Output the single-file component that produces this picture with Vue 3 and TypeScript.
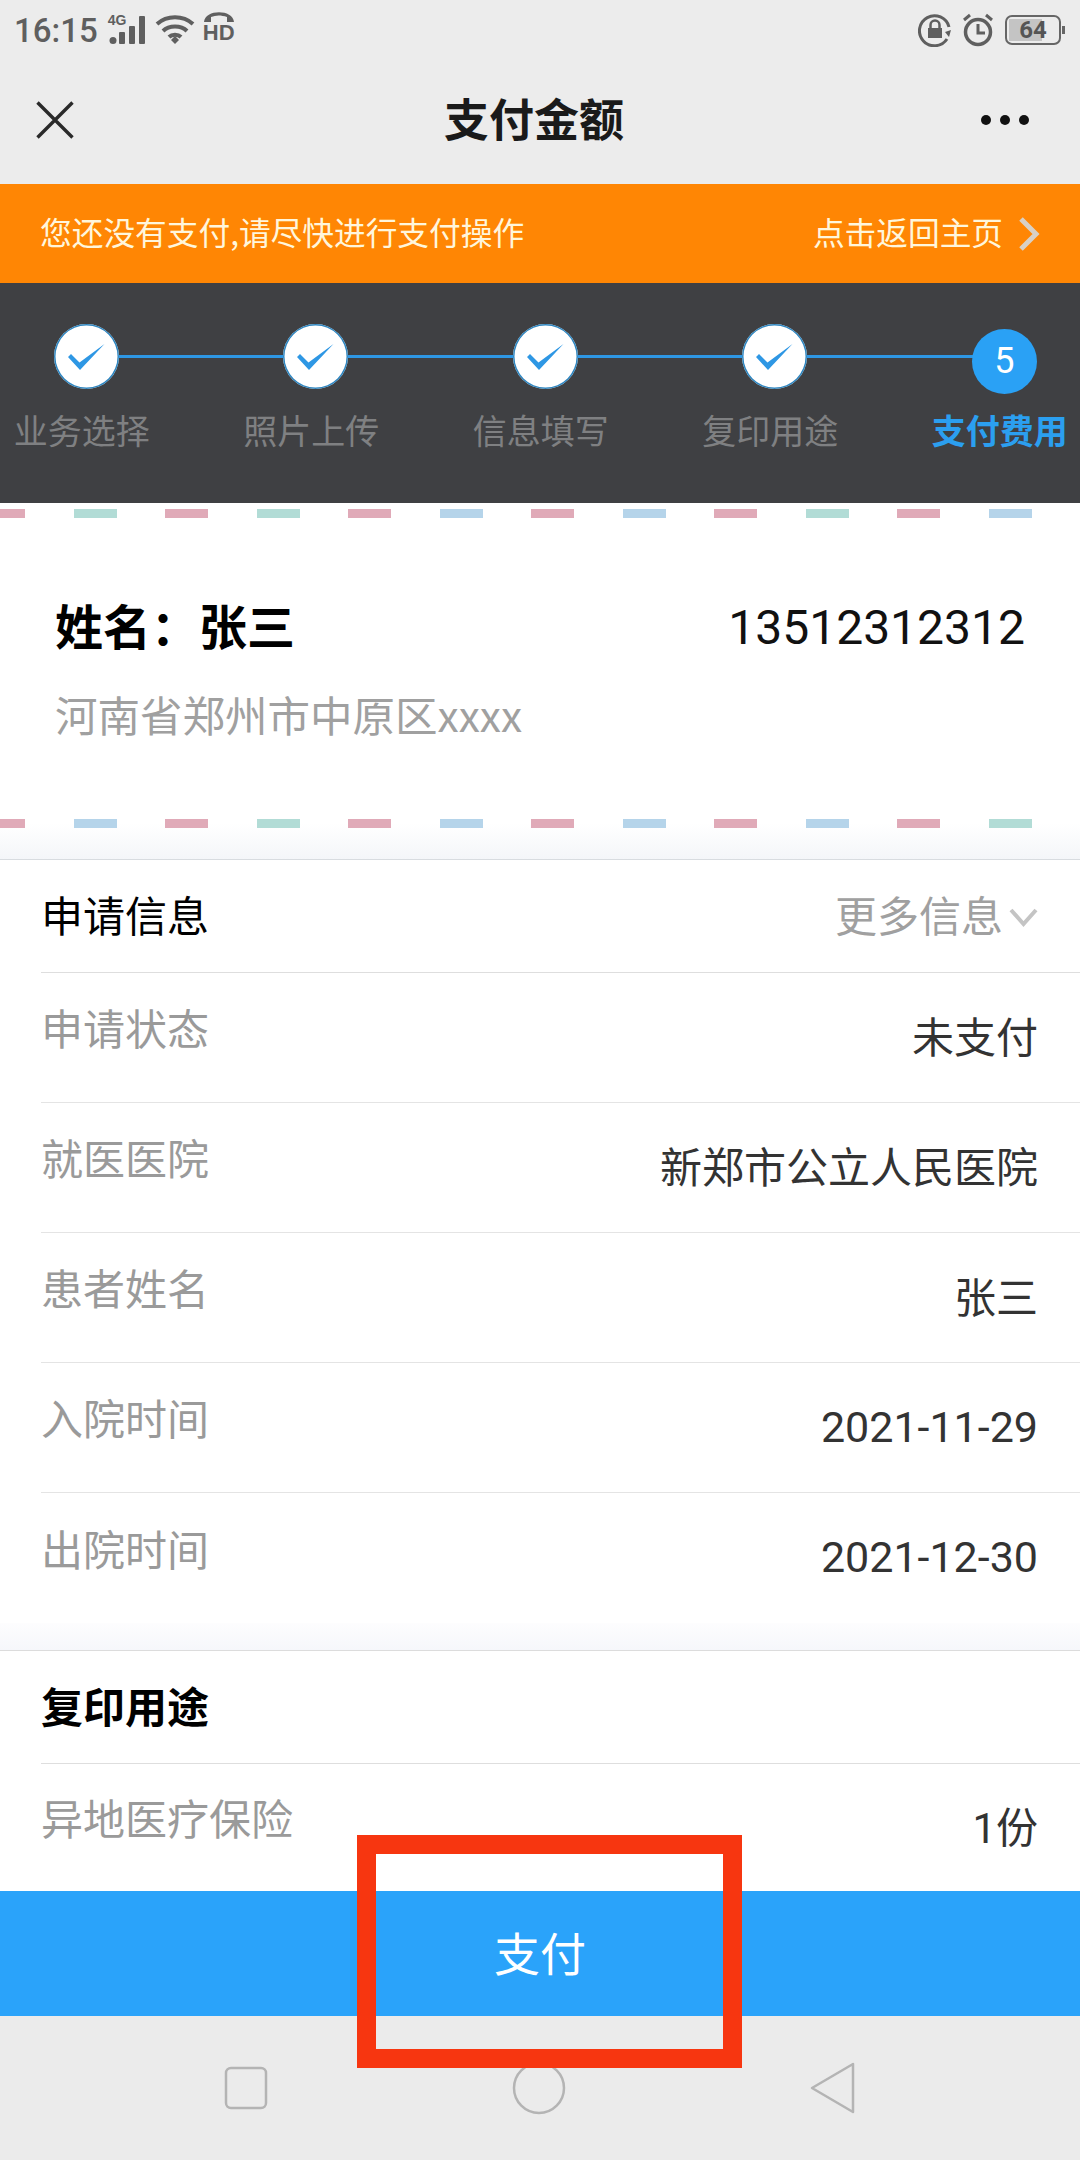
<template>
  <div class="phone">
    <header class="top">
      <div class="status">
        <div class="status-left">
          <span class="clock">16:15</span>
          <div class="sb-signal">
            <span class="sb-4g">4G</span>
            <svg width="40" height="30" viewBox="0 0 40 30">
              <circle cx="5" cy="25.5" r="3.5" fill="#5f5f5f" />
              <rect x="11" y="17" width="6" height="12" rx="1" fill="#5f5f5f" />
              <rect x="21" y="11" width="6" height="18" rx="1" fill="#5f5f5f" />
              <rect x="31" y="1" width="6" height="28" rx="1" fill="#5f5f5f" />
            </svg>
          </div>
          <svg class="sb-wifi" width="40" height="30" viewBox="0 0 40 30" fill="none" stroke="#5f5f5f" stroke-width="4">
            <path d="M2 9 C12 0 28 0 38 9" />
            <path d="M8 16 C14 10 26 10 32 16" />
            <path d="M14 22 C17 19 23 19 26 22" />
            <path d="M16 25 L20 21 L24 25 L20 29 Z" fill="#5f5f5f" stroke="none" />
          </svg>
          <div class="sb-hd">
            <svg width="32" height="14" viewBox="0 0 32 14">
              <path d="M1 12 C2 -1 30 -1 31 12 L24 12 L24 7 C18 5 13 5 8 7 L8 12 Z" fill="#5f5f5f" />
            </svg>
            <span class="sb-hd-text">HD</span>
          </div>
        </div>
        <div class="status-right">
          <svg width="34" height="34" viewBox="0 0 34 34" fill="none" stroke="#5f5f5f" stroke-width="3">
            <path d="M29 26 A15 15 0 1 1 31 14" />
            <path d="M27 19 L33 17 L31 24 Z" fill="#5f5f5f" stroke="none" />
            <rect x="10" y="15" width="14" height="10" fill="#5f5f5f" stroke="none" />
            <path d="M12.5 15 V12 A4.5 4.5 0 0 1 21.5 12 V15" stroke-width="2.5" />
          </svg>
          <svg width="32" height="34" viewBox="0 0 32 34" fill="none" stroke="#5f5f5f" stroke-width="3.5">
            <circle cx="16" cy="19" r="12.5" />
            <path d="M16 11 V20 H23" stroke-width="3" />
            <path d="M2 7 L8 2 M30 7 L24 2" stroke-width="3" />
          </svg>
          <div class="battery">
            <div class="battery-body">
              <span class="battery-fill" :style="{ width: batteryLevel + '%' }"></span>
              <span class="battery-num">{{ batteryLevel }}</span>
            </div>
            <span class="battery-cap"></span>
          </div>
        </div>
      </div>
      <div class="nav">
        <svg width="38" height="38" viewBox="0 0 38 38" stroke="#2a2a2a" stroke-width="3.4">
          <path d="M1.5 1.5 L36.5 36.5 M36.5 1.5 L1.5 36.5" />
        </svg>
        <h1 class="title">支付金额</h1>
        <div class="dots"><i></i><i></i><i></i></div>
      </div>
    </header>

    <div class="notice">
      <span>您还没有支付,请尽快进行支付操作</span>
      <span class="notice-link">
        点击返回主页
        <svg width="22" height="34" viewBox="0 0 22 34" fill="none" stroke="#d8d0c6" stroke-width="5">
          <path d="M3 2 L18 17 L3 32" />
        </svg>
      </span>
    </div>

    <div class="steps">
      <div class="steps-track">
        <div v-for="(step, i) in steps" :key="step" class="step" :class="{ current: i === steps.length - 1 }">
          <div class="step-dot">
            <svg v-if="i < steps.length - 1" width="65" height="65" viewBox="0 0 65 65">
              <path d="M14 33 L17 30 L25.5 38.5 L50.5 20 L26 46 Z" fill="#2e97e4" />
            </svg>
            <span v-else>{{ i + 1 }}</span>
          </div>
          <div class="step-label">{{ step }}</div>
        </div>
      </div>
    </div>

    <section class="envelope">
      <div class="airmail top-edge">
        <i v-for="(c, i) in topDashes" :key="i" :style="{ background: c }"></i>
      </div>
      <div class="person">
        <div class="person-line">
          <span class="person-name">{{ personName }}</span>
          <span class="person-phone">13512312312</span>
        </div>
        <div class="person-addr">河南省郑州市中原区xxxx</div>
      </div>
      <div class="airmail bottom-edge">
        <i v-for="(c, i) in bottomDashes" :key="i" :style="{ background: c }"></i>
      </div>
    </section>

    <section class="panel">
      <div class="panel-head">
        <span class="head-text">申请信息</span>
        <span class="more">
          更多信息
          <svg width="29" height="20" viewBox="0 0 29 20" fill="none" stroke="#c4c4c4" stroke-width="4">
            <path d="M2 3 L14.5 17 L27 3" />
          </svg>
        </span>
      </div>
      <div v-for="row in infoRows" :key="row.label" class="row">
        <span class="row-label">{{ row.label }}</span>
        <span class="row-value" :class="{ date: isDate(row.value) }">{{ row.value }}</span>
      </div>
    </section>

    <div class="gap"></div>

    <section class="panel usage">
      <div class="panel-head">
        <span class="head-text bold">复印用途</span>
      </div>
      <div class="row short">
        <span class="row-label">异地医疗保险</span>
        <span class="row-value">1份</span>
      </div>
    </section>

    <button class="pay">支付</button>

    <footer class="softkeys">
      <svg width="44" height="44" viewBox="0 0 44 44" fill="none" stroke="#b4b4b4" stroke-width="2.5">
        <rect x="2" y="2" width="40" height="40" rx="5" />
      </svg>
      <svg width="54" height="54" viewBox="0 0 54 54" fill="none" stroke="#b4b4b4" stroke-width="2.5">
        <circle cx="27" cy="27" r="25" />
      </svg>
      <svg width="46" height="52" viewBox="0 0 46 52" fill="none" stroke="#b4b4b4" stroke-width="2.5" stroke-linejoin="round">
        <path d="M43 2 V50 L2 26 Z" />
      </svg>
    </footer>

    <div class="callout"></div>
  </div>
</template>

<script setup lang="ts">
const batteryLevel = 64

// full-width colon between label and name
const personName = '姓名\uFF1A张三'

const steps = ['业务选择', '照片上传', '信息填写', '复印用途', '支付费用']

const infoRows = [
  { label: '申请状态', value: '未支付' },
  { label: '就医医院', value: '新郑市公立人民医院' },
  { label: '患者姓名', value: '张三' },
  { label: '入院时间', value: '2021-11-29' },
  { label: '出院时间', value: '2021-12-30' },
]

function isDate(value: string) {
  return /^\d{4}-\d{2}-\d{2}$/.test(value)
}

const RED = '#e0aab8'
const TEAL = '#b2dcd6'
const BLUE = '#b5d4ea'

// airmail stripe: red every other dash, the cool colour varies along the edge
const topCool = [TEAL, TEAL, BLUE, BLUE, TEAL, BLUE]
const bottomCool = [BLUE, TEAL, BLUE, BLUE, BLUE, TEAL]
const topDashes = Array.from({ length: 13 }, (_, i) => (i % 2 ? topCool[(i - 1) / 2] : RED))
const bottomDashes = Array.from({ length: 13 }, (_, i) => (i % 2 ? bottomCool[(i - 1) / 2] : RED))
</script>

<style>
html,
body {
  margin: 0;
  background: #ebebeb;
}
</style>

<style scoped>
.phone {
  position: relative;
  width: 1080px;
  height: 2160px;
  overflow: hidden;
  background: #fff;
  font-family: "Noto Sans CJK SC", Roboto, sans-serif;
  display: flex;
  flex-direction: column;
}

.top {
  height: 184px;
  background: #ececec;
}
.status {
  height: 56px;
  padding: 4px 15px 0 14px;
  display: flex;
  justify-content: space-between;
  align-items: center;
  box-sizing: border-box;
}
.status-left,
.status-right {
  display: flex;
  align-items: center;
}
.clock {
  font-family: Roboto, sans-serif;
  font-weight: 500;
  font-size: 33px;
  color: #5f5f5f;
}
.sb-signal {
  position: relative;
  margin-left: 10px;
  height: 30px;
}
.sb-signal svg {
  display: block;
}
.sb-4g {
  position: absolute;
  left: 0;
  top: -3px;
  font: 700 14px/16px "Liberation Sans", sans-serif;
  color: #5f5f5f;
}
.sb-wifi {
  margin-left: 7px;
}
.sb-hd {
  margin-left: 8px;
  margin-top: -9px;
  display: flex;
  flex-direction: column;
  align-items: center;
  width: 32px;
}
.sb-hd svg {
  display: block;
}
.sb-hd-text {
  font: 700 22px/17px "Liberation Sans", sans-serif;
  color: #5f5f5f;
}
.status-right {
  gap: 10px;
}
.battery {
  display: flex;
  align-items: center;
  margin-left: 1px;
}
.battery-body {
  position: relative;
  width: 56px;
  height: 30px;
  border: 2px solid #666;
  border-radius: 7px;
  box-sizing: border-box;
  display: flex;
  align-items: center;
  justify-content: center;
}
.battery-fill {
  position: absolute;
  left: 2px;
  top: 2px;
  bottom: 2px;
  background: #c4c4c4;
}
.battery-num {
  position: relative;
  font: 700 24px Roboto, sans-serif;
  color: #555;
}
.battery-cap {
  width: 3px;
  height: 8px;
  background: #666;
  margin-left: 1px;
}

.nav {
  height: 128px;
  padding: 0 51px 0 36px;
  display: flex;
  align-items: center;
  justify-content: space-between;
  position: relative;
}
.title {
  position: absolute;
  left: 0;
  right: 12px;
  margin: 0;
  padding-bottom: 6px;
  text-align: center;
  font-size: 45px;
  font-weight: 700;
  color: #1a1a1a;
}
.dots {
  display: flex;
  gap: 9px;
}
.dots i {
  width: 10px;
  height: 10px;
  border-radius: 50%;
  background: #111;
}

.notice {
  height: 99px;
  background: #ff8604;
  padding: 0 40px 5px;
  box-sizing: border-box;
  display: flex;
  align-items: center;
  justify-content: space-between;
  color: #fff6dc;
  font-size: 31.7px;
}
.notice-link {
  display: flex;
  align-items: center;
  gap: 15px;
}
.notice-link svg {
  margin-top: 5px;
}

.steps {
  height: 220px;
  background: #3f4043;
}
.steps-track {
  display: grid;
  grid-template-columns: repeat(5, 229.5px);
  margin-left: -33px;
  height: 100%;
}
.step {
  position: relative;
  display: flex;
  flex-direction: column;
  align-items: center;
  padding-top: 41px;
}
.step-dot {
  position: relative;
  z-index: 1;
  width: 65px;
  height: 65px;
  margin-left: 9px;
  border-radius: 50%;
  background: #fff;
  box-shadow: inset 0 0 0 1.5px #2f86c0;
}
.step-dot svg {
  display: block;
}
/* connector from this dot to the next one */
.step::after {
  content: "";
  position: absolute;
  top: 72px;
  left: 50%;
  width: 229.5px;
  height: 3px;
  background: #2e97e4;
}
.step.current::after {
  display: none;
}
.step.current .step-dot {
  margin-top: 5px;
  background: #2aa1f5;
  box-shadow: none;
  color: #fff;
  font: 400 36px/65px Roboto, sans-serif;
  text-align: center;
}
.step-label {
  margin-top: 18px;
  font-size: 34px;
  line-height: 46px;
  color: #7f8082;
}
.step.current .step-label {
  margin-top: 13px;
  color: #2b9ff0;
  font-weight: 700;
}

.envelope {
  height: 357px;
  box-sizing: border-box;
  background: linear-gradient(#fff 90%, #f4f6f9);
  border-bottom: 1px solid #d8dce0;
  position: relative;
}
.airmail {
  display: flex;
  gap: 48.5px;
  margin-left: -18px;
  height: 9px;
}
.airmail i {
  flex: none;
  width: 43px;
  height: 9px;
}
.top-edge {
  padding-top: 6px;
}
.bottom-edge {
  position: absolute;
  left: 0;
  top: 316px;
}
.person {
  padding: 76px 55px 0;
}
.person-line {
  display: flex;
  justify-content: space-between;
  align-items: center;
  height: 60px;
}
.person-name {
  font-size: 48px;
  font-weight: 700;
  color: #000;
}
.person-phone {
  margin-top: 6px;
  font: 400 48px Roboto, sans-serif;
  color: #111;
}
.person-addr {
  margin-top: 30px;
  font-size: 42.5px;
  line-height: 60px;
  color: #a0a0a0;
}

.panel {
  padding-left: 41px;
  background: #fff;
}
.panel-head {
  height: 113px;
  padding-right: 42px;
  padding-bottom: 6px;
  display: flex;
  align-items: center;
  justify-content: space-between;
  border-bottom: 1px solid #dedede;
  box-sizing: border-box;
}
.head-text {
  font-size: 42px;
  color: #000;
}
.head-text.bold {
  font-weight: 700;
}
.more {
  display: flex;
  align-items: center;
  gap: 6px;
  font-size: 42px;
  color: #a0a0a0;
}
.more svg {
  margin-top: 8px;
}
.row {
  height: 130px;
  padding-right: 42px;
  display: flex;
  justify-content: space-between;
  align-items: center;
  border-bottom: 1px solid #e4e4e4;
  box-sizing: border-box;
}
.row:last-child {
  border-bottom: 0;
}
.row-label {
  font-size: 42px;
  color: #9a9a9a;
  transform: translateY(-11px);
}
.row-value {
  font-family: Roboto, "Noto Sans CJK SC", sans-serif;
  font-size: 42px;
  color: #333;
  transform: translateY(-3px);
}
.row-value.date {
  font-size: 43px;
  transform: translateY(-1px);
}
.gap {
  height: 27px;
  background: linear-gradient(#fdfdfe, #f6f7fb);
}
.usage {
  border-top: 1px solid #dcdcdc;
}
.row.short {
  height: 127px;
}

.pay {
  height: 125px;
  border: 0;
  padding: 0 0 6px;
  background: #2aa3fa;
  color: #fff;
  font-family: inherit;
  font-size: 46px;
}
.softkeys {
  flex: 1;
  background: #ebebeb;
  display: flex;
  align-items: center;
  padding: 0 224px;
  justify-content: space-between;
}

/* red marker drawn over the pay button */
.callout {
  position: absolute;
  left: 357px;
  top: 1835px;
  width: 385px;
  height: 233px;
  border: 19px solid #f73610;
  box-sizing: border-box;
}
</style>
